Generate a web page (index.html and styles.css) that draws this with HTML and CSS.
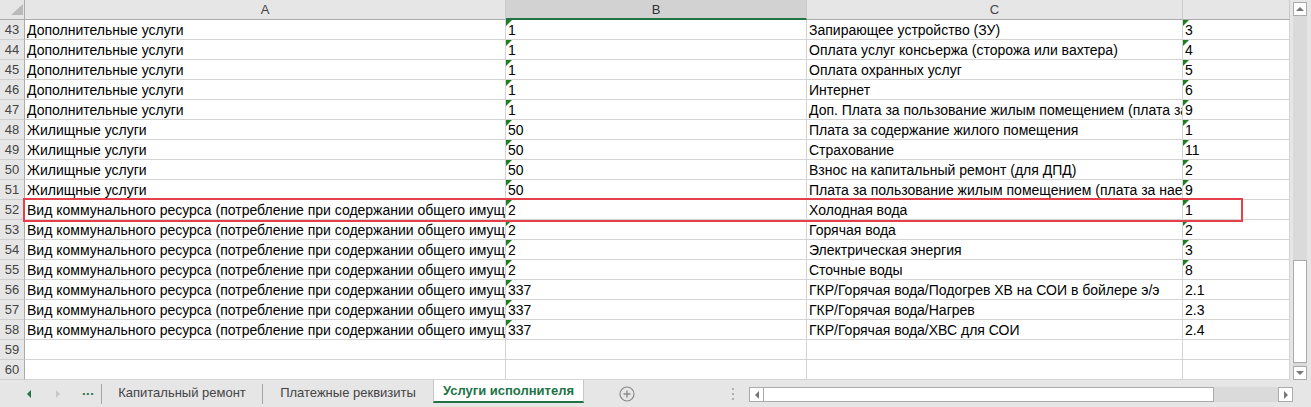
FILE: index.html
```html
<!DOCTYPE html>
<html lang="ru">
<head>
  <meta charset="UTF-8">
  <title>Услуги исполнителя</title>
  <link rel="stylesheet" href="styles.css">
</head>
<body>
  <div class="app">
    <div class="main">
      <!-- Лист -->
      <div class="sheet">
        <div class="hd corner"><span class="corner-tri"></span></div>
        <div class="hd">A</div>
        <div class="hd sel">B</div>
        <div class="hd">C</div>
        <div class="hd"></div>

        <div class="rn">43</div><div class="c">Дополнительные услуги</div><div class="c tri">1</div><div class="c">Запирающее устройство (ЗУ)</div><div class="c tri">3</div>
        <div class="rn">44</div><div class="c">Дополнительные услуги</div><div class="c tri">1</div><div class="c">Оплата услуг консьержа (сторожа или вахтера)</div><div class="c tri">4</div>
        <div class="rn">45</div><div class="c">Дополнительные услуги</div><div class="c tri">1</div><div class="c">Оплата охранных услуг</div><div class="c tri">5</div>
        <div class="rn">46</div><div class="c">Дополнительные услуги</div><div class="c tri">1</div><div class="c">Интернет</div><div class="c tri">6</div>
        <div class="rn">47</div><div class="c">Дополнительные услуги</div><div class="c tri">1</div><div class="c">Доп. Плата за пользование жилым помещением (плата за наем)</div><div class="c tri">9</div>
        <div class="rn">48</div><div class="c">Жилищные услуги</div><div class="c tri">50</div><div class="c">Плата за содержание жилого помещения</div><div class="c tri">1</div>
        <div class="rn">49</div><div class="c">Жилищные услуги</div><div class="c tri">50</div><div class="c">Страхование</div><div class="c tri">11</div>
        <div class="rn">50</div><div class="c">Жилищные услуги</div><div class="c tri">50</div><div class="c">Взнос на капитальный ремонт (для ДПД)</div><div class="c tri">2</div>
        <div class="rn">51</div><div class="c">Жилищные услуги</div><div class="c tri">50</div><div class="c">Плата за пользование жилым помещением (плата за наем)</div><div class="c tri">9</div>
        <div class="rn">52</div><div class="c">Вид коммунального ресурса (потребление при содержании общего имущества)</div><div class="c tri">2</div><div class="c">Холодная вода</div><div class="c tri">1</div>
        <div class="rn">53</div><div class="c">Вид коммунального ресурса (потребление при содержании общего имущества)</div><div class="c tri">2</div><div class="c">Горячая вода</div><div class="c tri">2</div>
        <div class="rn">54</div><div class="c">Вид коммунального ресурса (потребление при содержании общего имущества)</div><div class="c tri">2</div><div class="c">Электрическая энергия</div><div class="c tri">3</div>
        <div class="rn">55</div><div class="c">Вид коммунального ресурса (потребление при содержании общего имущества)</div><div class="c tri">2</div><div class="c">Сточные воды</div><div class="c tri">8</div>
        <div class="rn">56</div><div class="c">Вид коммунального ресурса (потребление при содержании общего имущества)</div><div class="c tri">337</div><div class="c">ГКР/Горячая вода/Подогрев ХВ на СОИ в бойлере э/э</div><div class="c">2.1</div>
        <div class="rn">57</div><div class="c">Вид коммунального ресурса (потребление при содержании общего имущества)</div><div class="c tri">337</div><div class="c">ГКР/Горячая вода/Нагрев</div><div class="c">2.3</div>
        <div class="rn">58</div><div class="c">Вид коммунального ресурса (потребление при содержании общего имущества)</div><div class="c tri">337</div><div class="c">ГКР/Горячая вода/ХВС для СОИ</div><div class="c">2.4</div>
        <div class="rn">59</div><div class="c"></div><div class="c"></div><div class="c"></div><div class="c"></div>
        <div class="rn">60</div><div class="c"></div><div class="c"></div><div class="c"></div><div class="c"></div>

        <!-- выделенная строка -->
        <div class="mark"></div>
      </div>

      <!-- Вертикальная прокрутка -->
      <div class="vscroll">
        <div class="sb-btn"><span class="arr-up"></span></div>
        <div class="sb-track"></div>
        <div class="sb-thumb"></div>
        <div class="sb-gap"></div>
        <div class="sb-btn"><span class="arr-down"></span></div>
      </div>
    </div>

    <!-- Ярлыки листов -->
    <div class="tabbar">
      <div class="nav">
        <span class="nav-left"></span>
        <span class="nav-right"></span>
        <span class="dots">...</span>
      </div>
      <div class="tab-sep"></div>
      <div class="tab w1">Капитальный ремонт</div>
      <div class="tab-sep"></div>
      <div class="tab w2">Платежные реквизиты</div>
      <div class="tab active">Услуги исполнителя</div>
      <div class="add">
        <svg width="16" height="16" viewBox="0 0 16 16">
          <circle cx="8" cy="8" r="7" fill="none" stroke="#8a8a8a" stroke-width="1.2"/>
          <path d="M8 4.5v7M4.5 8h7" stroke="#8a8a8a" stroke-width="1.4"/>
        </svg>
      </div>
      <div class="grip"><i></i><i></i><i></i></div>
      <div class="hscroll">
        <div class="hs-btn"><span class="arr-left"></span></div>
        <div class="hs-thumb"></div>
        <div class="hs-track"></div>
        <div class="hs-btn"><span class="arr-right"></span></div>
      </div>
    </div>
  </div>
</body>
</html>
```

FILE: styles.css
```css
body {
  margin: 0;
  background: #fff;
  font-family: "Liberation Sans", Arial, sans-serif;
  color: #000;
}
.app {
  width: 1311px;
  height: 407px;
  overflow: hidden;
  display: flex;
  flex-direction: column;
}
.main {
  display: flex;
  height: 380px;
}

/* сетка листа */
.sheet {
  position: relative;
  width: 1290px;
  display: grid;
  grid-template-columns: 25px 481px 301px 376px 107px;
  grid-auto-rows: 20px;
}
.sheet > div {
  box-sizing: border-box;
}
.hd {
  background: #e6e6e6;
  border-right: 1px solid #cacaca;
  border-bottom: 1px solid #ababab;
  color: #444;
  font-size: 13px;
  line-height: 19px;
  text-align: center;
}
.hd.sel {
  background: #d2d2d2;
  border-bottom: 2px solid #217346;
  color: #333;
}
.corner {
  display: flex;
  justify-content: flex-end;
  align-items: flex-end;
  padding: 0 1px 4px 0;
  border-right-color: #ababab;
}
.corner-tri {
  width: 0;
  height: 0;
  border-left: 12px solid transparent;
  border-bottom: 11px solid #b9b9b9;
}
.rn {
  background: #e6e6e6;
  border-right: 1px solid #ababab;
  border-bottom: 1px solid #cfcfcf;
  color: #444;
  font-size: 13px;
  line-height: 18px;
  padding-top: 1px;
  text-align: center;
}
.c {
  position: relative;
  border-right: 1px solid #d4d4d4;
  border-bottom: 1px solid #d4d4d4;
  padding: 1px 0 0 2px;
  font-size: 14px;
  line-height: 18px;
  white-space: nowrap;
  overflow: hidden;
}
.c.tri::before {
  content: "";
  position: absolute;
  top: 0;
  left: 0;
  border-top: 6px solid #1e7e24;
  border-right: 6px solid transparent;
}
.mark {
  position: absolute;
  left: 23px;
  top: 198px;
  width: 1220px;
  height: 24px;
  border: 2px solid #e5404a;
}

/* вертикальная полоса прокрутки */
.vscroll {
  width: 21px;
  box-sizing: border-box;
  background: #e6e6e6;
  padding: 2px 4px 0 3px;
  display: flex;
  flex-direction: column;
}
.sb-btn {
  height: 14px;
  box-sizing: border-box;
  background: #fff;
  border: 1px solid #ababab;
  display: flex;
  align-items: center;
  justify-content: center;
}
.sb-track {
  height: 244px;
  background: #dadada;
}
.sb-thumb {
  height: 103px;
  box-sizing: border-box;
  background: #fff;
  border: 1px solid #ababab;
}
.sb-gap {
  height: 3px;
  background: #dadada;
}
.arr-up, .arr-down, .arr-left, .arr-right {
  width: 0;
  height: 0;
}
.arr-up {
  border-left: 4px solid transparent;
  border-right: 4px solid transparent;
  border-bottom: 4px solid #777;
}
.arr-down {
  border-left: 4px solid transparent;
  border-right: 4px solid transparent;
  border-top: 4px solid #777;
}
.arr-left {
  border-top: 4px solid transparent;
  border-bottom: 4px solid transparent;
  border-right: 4px solid #777;
}
.arr-right {
  border-top: 4px solid transparent;
  border-bottom: 4px solid transparent;
  border-left: 4px solid #777;
}

/* ярлыки */
.tabbar {
  height: 27px;
  background: #e6e6e6;
  display: flex;
  align-items: center;
  font-size: 13px;
  color: #444;
}
.nav {
  width: 101px;
  display: flex;
  align-items: center;
}
.nav-left {
  margin-left: 27px;
  border-top: 4px solid transparent;
  border-bottom: 4px solid transparent;
  border-right: 4px solid #217346;
}
.nav-right {
  margin-left: 25px;
  border-top: 4px solid transparent;
  border-bottom: 4px solid transparent;
  border-left: 4px solid #c8c8c8;
}
.dots {
  margin-left: 22px;
  color: #217346;
  font-weight: bold;
  letter-spacing: 0.5px;
  line-height: 1;
  margin-top: -6px;
}
.tab-sep {
  width: 1px;
  height: 20px;
  background: #a6a6a6;
}
.tab {
  height: 27px;
  line-height: 26px;
  text-align: center;
  box-sizing: border-box;
}
.tab.w1 { width: 160px; }
.tab.w2 { width: 170px; }
.tab.active {
  width: 151px;
  height: 24px;
  align-self: flex-start;
  margin-top: -1px;
  line-height: 23px;
  background: #fff;
  border-left: 1px solid #c6c6c6;
  border-right: 1px solid #c6c6c6;
  border-bottom: 2px solid #217346;
  color: #217346;
  font-weight: bold;
}
.add {
  width: 86px;
  display: flex;
  justify-content: center;
  align-items: center;
}
.add svg {
  display: block;
}
.grip {
  margin-left: 62px;
  width: 2px;
  display: flex;
  flex-direction: column;
  gap: 3px;
}
.grip i {
  display: block;
  width: 2px;
  height: 2px;
  background: #b0b0b0;
}
.hscroll {
  margin-left: 15px;
  width: 544px;
  height: 15px;
  display: flex;
  margin-top: 2px;
}
.hs-btn {
  width: 15px;
  box-sizing: border-box;
  background: #fff;
  border: 1px solid #ababab;
  display: flex;
  align-items: center;
  justify-content: center;
}
.hs-thumb {
  width: 450px;
  box-sizing: border-box;
  background: #fff;
  border: 1px solid #ababab;
  border-left: none;
}
.hs-track {
  flex: 1;
  background: #dadada;
}
```
